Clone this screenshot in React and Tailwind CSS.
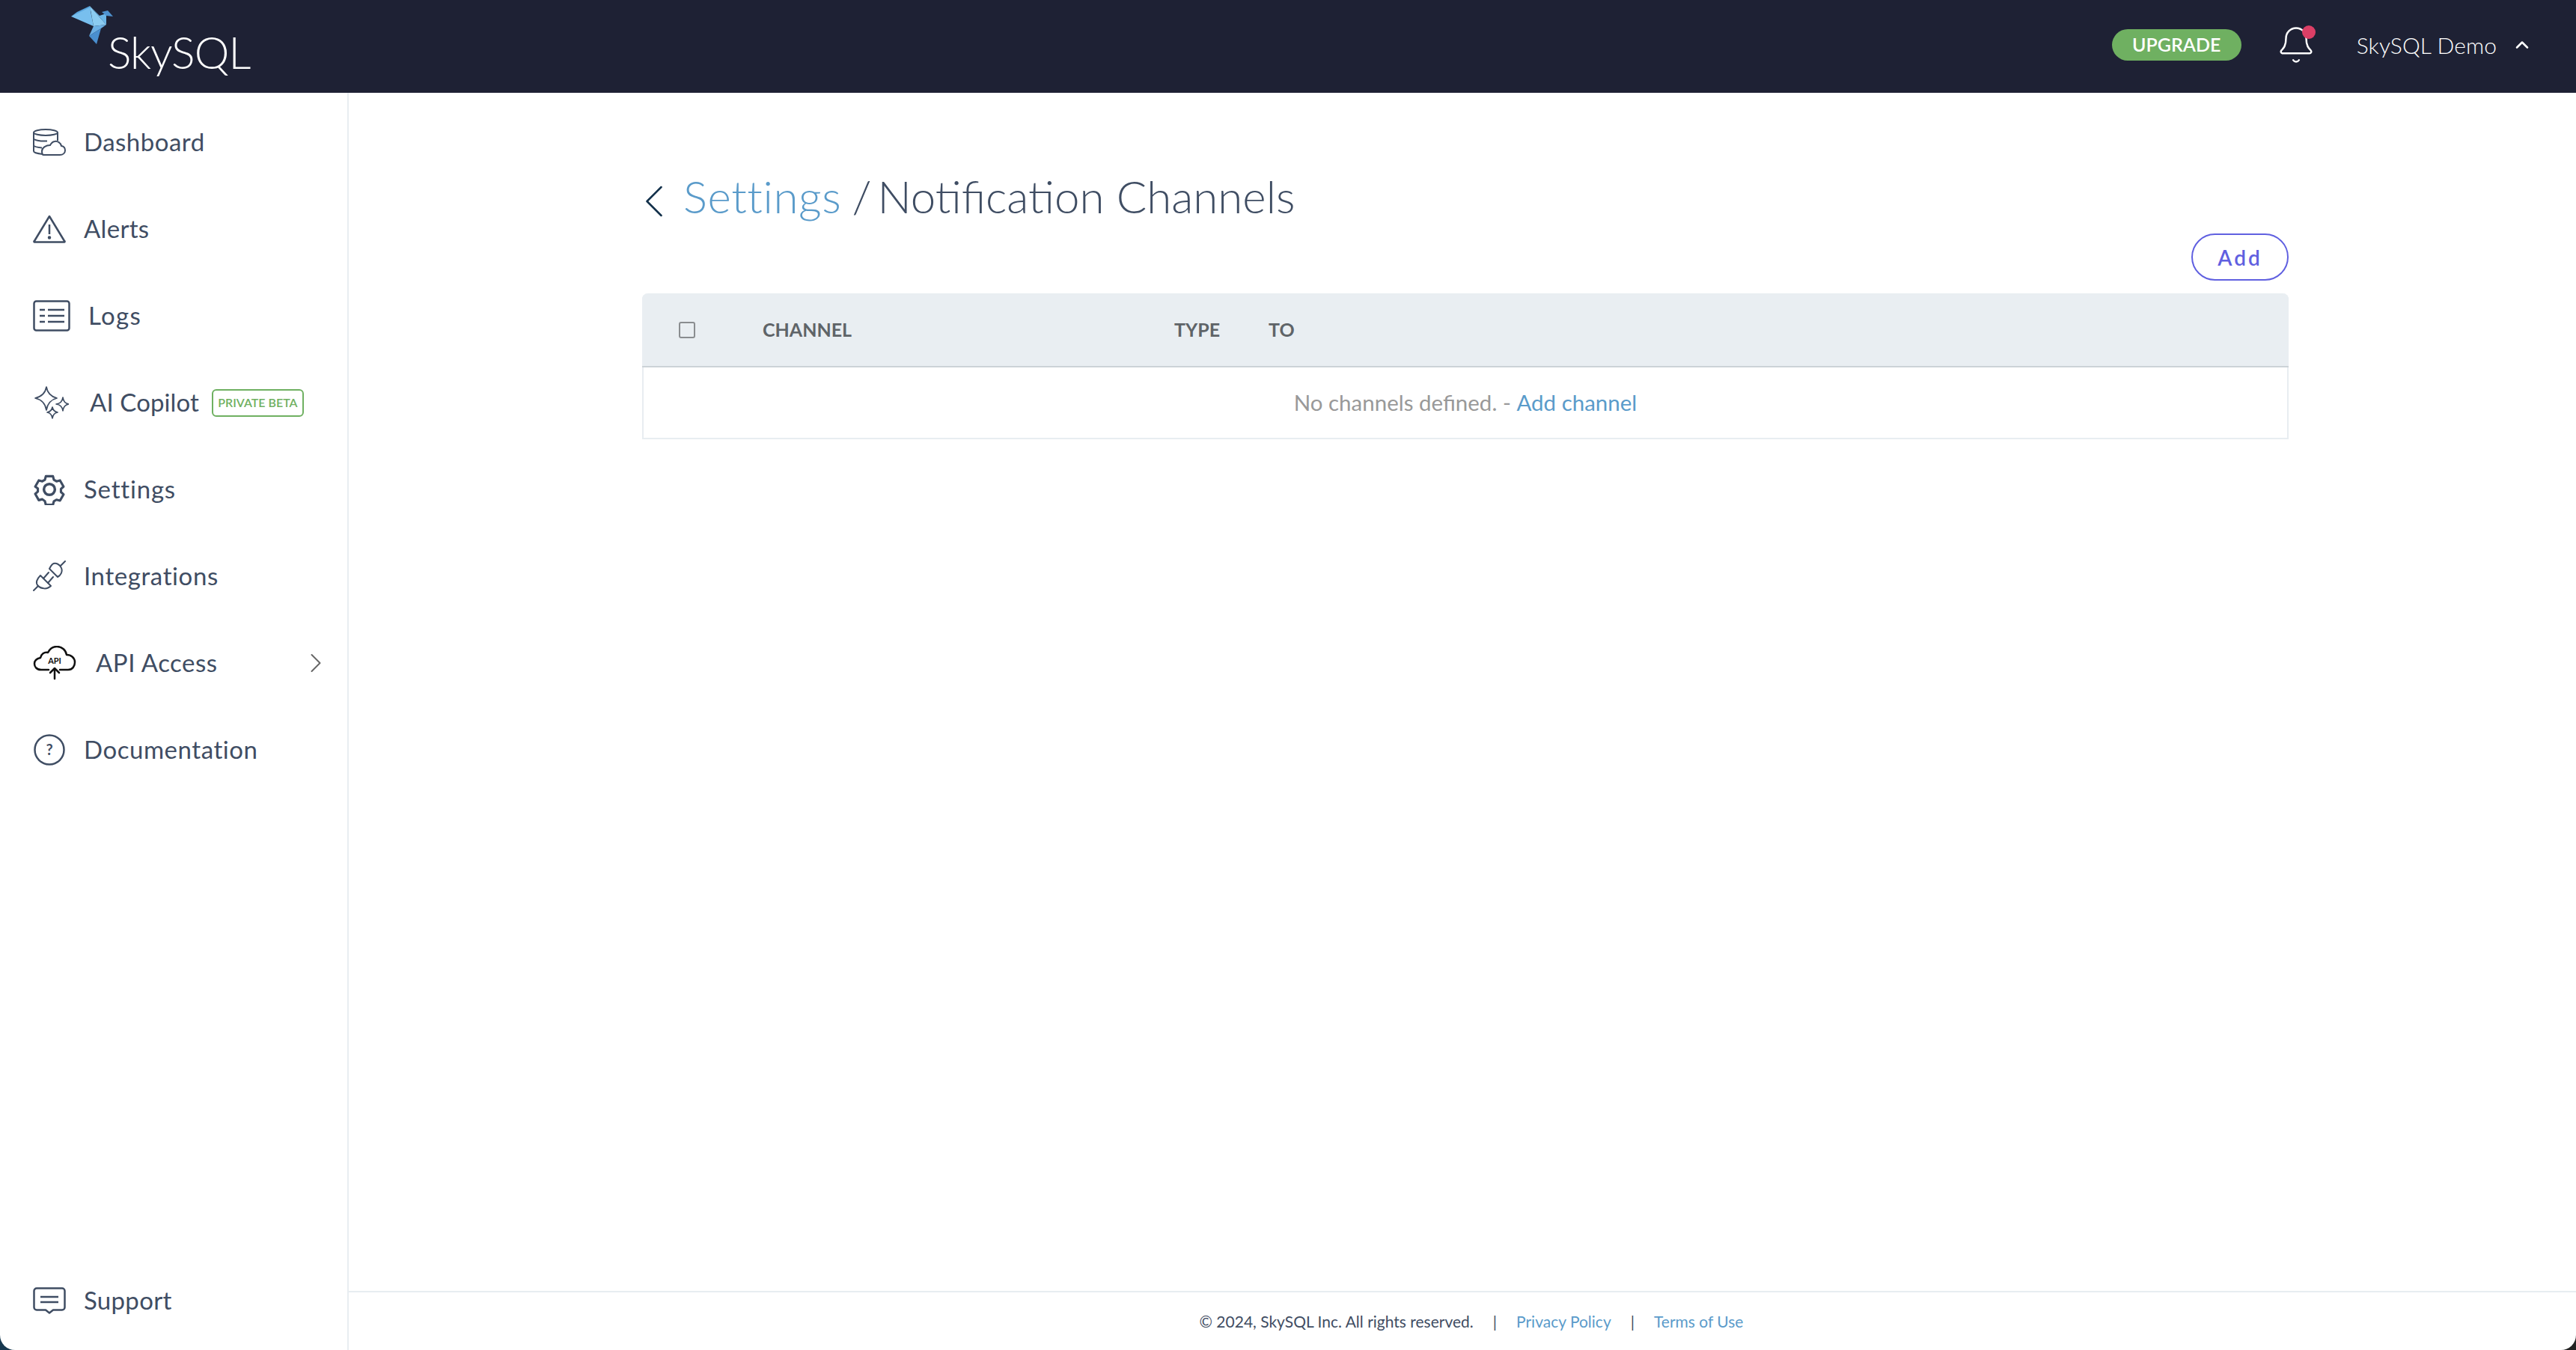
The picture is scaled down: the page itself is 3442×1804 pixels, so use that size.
import { ChevronLeft, ChevronRight, ChevronUp, Bell } from 'lucide-react';

const SLATE = '#3f4d63';

const DashboardIcon = () => (
  <svg width="44" height="38" viewBox="0 0 44 38" fill="none" stroke={SLATE} strokeWidth="2">
    <ellipse cx="17" cy="6" rx="16" ry="4" />
    <path d="M1 6v25c0 2 6 3.500 12 4M33 6v11M1 14c0 2 8 4 18 3.500M1 23c0 2 5 3 11 3.500" />
    <path d="M14 36h22c4 0 7-2.500 7-6 0-3-2-5.500-5-6-1-4-5-7-9-6-3 .5-5 3-6 5-5 0-11 3-11 8 0 3 1 5 2 5z" />
  </svg>
);

const AlertIcon = () => (
  <svg width="44" height="38" viewBox="0 0 44 38" fill="none" stroke={SLATE} strokeWidth="2.500" strokeLinejoin="round">
    <path d="M22 2 2 35a.5.5 0 0 0 .5 1.500h39a.5.5 0 0 0 .5-1.500z" />
    <path d="M22 13v13" />
    <circle cx="22" cy="30.500" r="1" fill={SLATE} />
  </svg>
);

const LogsIcon = () => (
  <svg width="50" height="42" viewBox="0 0 50 42" fill="none" stroke={SLATE} strokeWidth="2.500">
    <rect x="1.500" y="1.500" width="47" height="39" rx="3" />
    <path d="M9 13h7M20 13h22M9 21h7M20 21h22M9 29h7M20 29h22" />
  </svg>
);

const SparkleIcon = () => (
  <svg width="48" height="44" viewBox="-2 0 48 44" fill="none" stroke={SLATE} strokeWidth="1.700" strokeLinejoin="round">
    <path d="M16 1Q18 13 30 16 18 19 16 32 14 19 1 16 14 13 16 1z" />
    <path d="M38 15Q39 23 46 24 39 25 38 33 37 25 29 24 37 23 38 15z" />
    <path d="M24 28Q25 34 31 35 25 36 24 43 23 36 17 35 23 34 24 28z" />
  </svg>
);

const GearIcon = () => (
  <svg width="44" height="42" viewBox="0 0 24 24" fill="none" stroke={SLATE} strokeWidth="2" strokeLinejoin="round">
    <path d="M9 1.500h6l.8 3 2.200 1.300 3-.8 3 5.300-2.200 2 0 2.600 2.200 2-3 5.300-3-.8-2.200 1.300-.8 3H9l-.8-3L6 21l-3 .8-3-5.300 2.200-2 0-2.600L0 10.300l3-5.300 3 .8 2.200-1.300z" transform="translate(1.200 .6) scale(.9)" />
    <circle cx="12" cy="12" r="4.200" />
  </svg>
);

const PlugIcon = () => (
  <svg width="44" height="42" viewBox="0 0 44 42" fill="none" stroke={SLATE} strokeWidth="2" strokeLinecap="round" strokeLinejoin="round">
    <path d="M1 40l6-6M37 7l6-6" />
    <path d="M10 20 24 34C19 39 11 38 7 34 3 30 5 25 10 20z" />
    <path d="M14 24l7-8M20 30l7-8" />
    <path d="M22 11 33 22C37 20 40 15 38 10 36 5 30 2 26 5 24 7 23 9 22 11z" />
  </svg>
);

const ApiIcon = () => (
  <svg width="58" height="46" viewBox="0 0 58 46" fill="none" stroke="#111" strokeWidth="2.500" strokeLinecap="round" strokeLinejoin="round">
    <path d="M21 32H11C5 32 2 28 2 24s3-7 8-8c1-5 5-8 10-7 3-6 8-8 12-8 7 0 12 5 13 11 6 0 11 4 11 10 0 5-3 10-9 10H36" />
    <path d="M29 44V30M23 36l6-6 6 6" />
    <text x="29" y="24" textAnchor="middle" fontSize="11" fontWeight="700" fill="#111" stroke="none" fontFamily="Lato, sans-serif">API</text>
  </svg>
);

const HelpIcon = () => (
  <svg width="44" height="42" viewBox="0 0 44 42" fill="none" stroke={SLATE} strokeWidth="2.500">
    <circle cx="22" cy="21" r="19.500" />
    <text x="22" y="28" textAnchor="middle" fontSize="20" fontWeight="700" fill={SLATE} stroke="none" fontFamily="Lato, sans-serif">?</text>
  </svg>
);

const SupportIcon = () => (
  <svg width="44" height="36" viewBox="0 0 44 36" fill="none" stroke={SLATE} strokeWidth="2.500" strokeLinejoin="round">
    <path d="M5 1.500h34a3.500 3.500 0 0 1 3.500 3.500v22a3.500 3.500 0 0 1-3.500 3.500H27l-5 4-5-4H5A3.500 3.500 0 0 1 1.500 27V5A3.500 3.500 0 0 1 5 1.500z" />
    <path d="M10 13h24M10 20h24" />
  </svg>
);

const Bird = () => (
  <svg width="56" height="51" viewBox="0 0 56 51">
    <polygon points="8,8 25,0 27,6 0,14" fill="#5aa6de" />
    <polygon points="0,14 25,2 30,27" fill="#78bfee" />
    <polygon points="25,0 47,25 30,27" fill="#8bcbf0" />
    <polygon points="25,0 38,13 47,10 47,25" fill="#6cb6e8" />
    <polygon points="41,8 49,6 56,14 47,13" fill="#4f93d1" />
    <polygon points="30,27 47,25 40,30 24,40" fill="#6cb0e4" />
    <polygon points="24,40 40,30 34,51" fill="#4a8fcf" />
  </svg>
);

const navItems = [
  { label: 'Dashboard', icon: <DashboardIcon />, gap: 'w-[68px]', track: 'tracking-[0.5px]' },
  { label: 'Alerts', icon: <AlertIcon />, gap: 'w-[68px]', track: 'tracking-[0.3px]' },
  { label: 'Logs', icon: <LogsIcon />, gap: 'w-[74px]', track: 'tracking-[1.3px]' },
  { label: 'AI Copilot', icon: <SparkleIcon />, gap: 'w-[76px]', track: 'tracking-[0.1px]', badge: 'PRIVATE BETA' },
  { label: 'Settings', icon: <GearIcon />, gap: 'w-[68px]', track: 'tracking-[0.8px]' },
  { label: 'Integrations', icon: <PlugIcon />, gap: 'w-[68px]', track: 'tracking-[0.6px]' },
  { label: 'API Access', icon: <ApiIcon />, gap: 'w-[84px]', track: 'tracking-[0.5px]', arrow: true },
  { label: 'Documentation', icon: <HelpIcon />, gap: 'w-[68px]', track: 'tracking-[0.55px]' },
];

const NavItem = ({ label, icon, gap, track, badge, arrow }) => (
  <div className="h-[116px] flex items-center text-[33px] text-[#3f4d63]">
    <div className={`${gap} shrink-0 flex items-center`}>{icon}</div>
    <span className={track}>{label}</span>
    {badge && (
      <span className="ml-[17px] h-[37px] w-[123px] flex items-center justify-center rounded-[6px] border-2 border-[#6fb061] text-[#6fb061] text-[16px] font-semibold">
        {badge}
      </span>
    )}
    {arrow && <ChevronRight className="ml-auto mr-[-14px] shrink-0" size={44} strokeWidth={1.100} color="#666" />}
  </div>
);

export default function App() {
  return (
    <div className="w-[3442px] h-[1804px] bg-gradient-to-r from-[#17384f] to-[#222222] font-['Lato',sans-serif] overflow-hidden">
      <div className="h-full flex flex-col bg-white rounded-b-[20px] overflow-hidden">
        {/* Top bar */}
        <header className="h-[124px] shrink-0 bg-[#1e2134] flex items-center text-white">
          <div className="relative ml-[144px] mt-[14px] text-[59px] font-light leading-none tracking-[-1px]">
            <div className="absolute left-[-49px] top-[-32px]"><Bird /></div>
            SkySQL
          </div>
          <div className="ml-auto flex items-center mr-[58px] pb-[4px]">
            <button className="w-[173px] h-[42px] rounded-full bg-[#6fb061] text-[25px] font-semibold flex items-center justify-center">
              UPGRADE
            </button>
            <div className="relative ml-[50px] w-[46px] h-[54px] flex items-center justify-center">
              <Bell className="shrink-0" size={54} strokeWidth={1.100} />
              <span className="absolute right-[-3px] top-[1px] w-[18px] h-[18px] rounded-full bg-[#dc3f66]"></span>
            </div>
            <span className="ml-[58px] text-[30px] font-light tracking-[0.1px]">SkySQL Demo</span>
            <ChevronUp className="ml-[20px]" size={28} strokeWidth={2.200} />
          </div>
        </header>

        <div className="flex-1 flex min-h-0">
          {/* Sidebar */}
          <aside className="w-[466px] shrink-0 border-r-2 border-[#e8edf1] flex flex-col pl-[44px] pr-[34px] pt-[8px]">
            {navItems.map((item) => (
              <NavItem key={item.label} {...item} />
            ))}
            <div className="mt-auto mb-[8px]">
              <NavItem label="Support" icon={<SupportIcon />} gap="w-[68px]" track="tracking-[0.3px]" />
            </div>
          </aside>

          {/* Main content */}
          <main className="flex-1 flex flex-col min-w-0">
            <div className="flex-1 pl-[392px] pr-[384px] pt-[100px]">
              <div className="flex items-center h-[76px] text-[60px] font-light text-[#3f4d63]">
                <ChevronLeft className="ml-[-22px] mr-[1px] mt-[14px] shrink-0" size={76} strokeWidth={0.800} color="#12304a" />
                <span className="text-[#5a9bca] tracking-[0.6px]">Settings</span>
                <span className="ml-[14px]">/</span>
                <span className="ml-[8px]">Notification Channels</span>
              </div>
              <div className="flex justify-end mt-[12px] h-[80px]">
                <button className="w-[130px] h-[63px] rounded-full border-2 border-[#6060e0] text-[#6060e0] text-[28px] font-semibold tracking-[3px] bg-white">
                  Add
                </button>
              </div>
              <div className="border-x-2 border-b-2 border-[#e8edf1] rounded-t-[8px]">
                <div className="mx-[-2px] h-[99px] bg-[#e9eef2] border-b-2 border-[#ccd2d7] rounded-t-[8px] flex items-center text-[25px] font-bold text-[#5f6468]">
                  <span className="ml-[49px] w-[22px] h-[22px] rounded-[3px] border-2 border-[#8a8d90]"></span>
                  <span className="ml-[90px] w-[550px]">CHANNEL</span>
                  <span className="w-[126px]">TYPE</span>
                  <span>TO</span>
                </div>
                <div className="h-[94px] flex items-center justify-center text-[29.5px] text-[#999]">
                  No channels defined. -&nbsp;<a className="text-[#5a9bca]">Add channel</a>
                </div>
              </div>
            </div>
            <footer className="h-[79px] shrink-0 border-t-2 border-[#e8edf1] flex items-center justify-center text-[21px] text-[#3f4d63] pl-[24px]">
              <span>© 2024, SkySQL Inc. All rights reserved.</span>
              <span className="mx-[26px]">|</span>
              <a className="text-[#5a9bca]">Privacy Policy</a>
              <span className="mx-[26px]">|</span>
              <a className="text-[#5a9bca]">Terms of Use</a>
            </footer>
          </main>
        </div>
      </div>
    </div>
  );
}
